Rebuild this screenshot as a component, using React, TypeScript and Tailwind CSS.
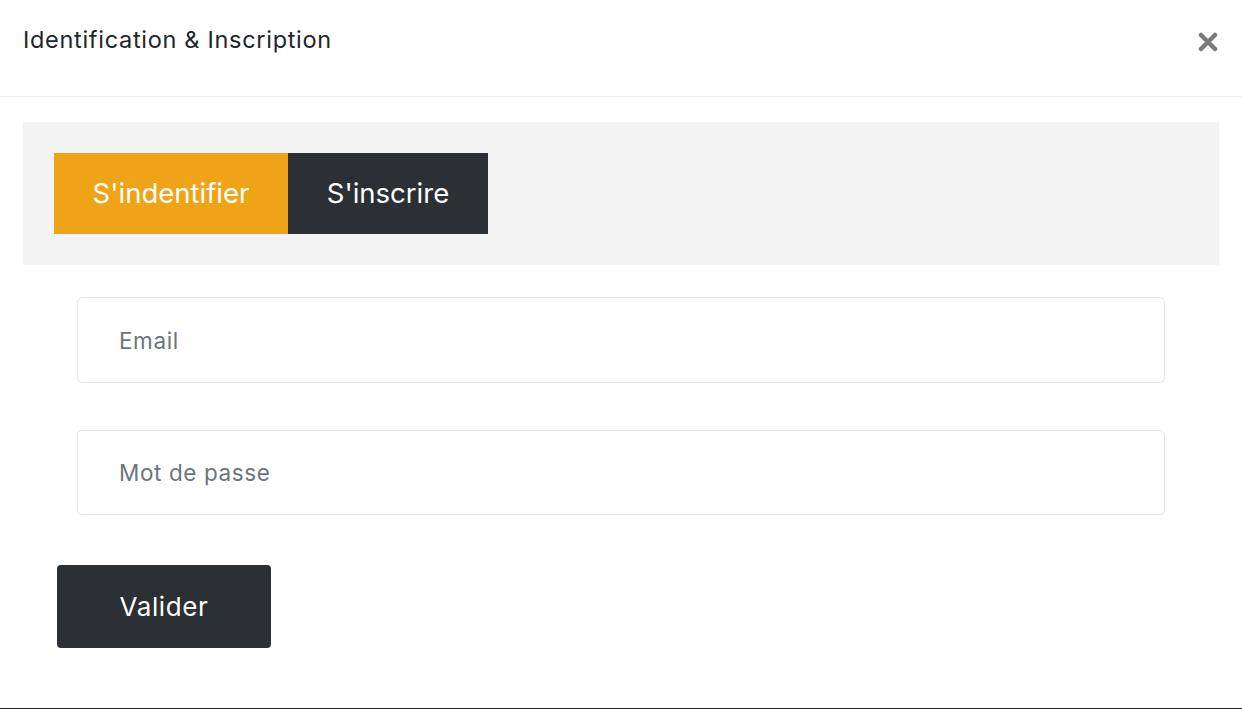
import { useState } from "react"

// Close icon, chunky "times" cross
function CloseIcon() {
  return (
    <svg width="20" height="20" viewBox="0 0 20 20" aria-hidden="true">
      <path d="M3 3 L17 17 M17 3 L3 17" stroke="#7a7a7a" strokeWidth="4.5" strokeLinecap="round" />
    </svg>
  )
}

export default function App() {
  const [tab, setTab] = useState<"login" | "signup">("login")

  return (
    <div className="w-[1242px] h-[709px] bg-white flex flex-col border-b border-[#222] font-['Inter',sans-serif]">
      {/* Header */}
      <div className="h-[97px] border-b border-[#e9ecef] flex justify-between pl-[23px] pr-[24px]">
        <h5 className="pt-[25px] text-[23.5px] leading-[30px] text-[#212529] font-normal tracking-[0.7px]">
          Identification &amp; Inscription
        </h5>
        <button className="pt-[32px] h-fit">
          <CloseIcon />
        </button>
      </div>

      {/* Body */}
      <div className="px-[23px] pt-[25px] flex flex-col">
        <div className="bg-[#f4f4f4] h-[143px] flex items-center pl-[31px]">
          <button
            onClick={() => setTab("login")}
            className={`w-[234px] h-[81px] text-white text-[27.5px] ${tab === "login" ? "bg-[#eea416]" : "bg-[#2c2f33]"}`}
          >
            S'indentifier
          </button>
          <button
            onClick={() => setTab("signup")}
            className={`w-[200px] h-[81px] text-white text-[27.5px] ${tab === "signup" ? "bg-[#eea416]" : "bg-[#2c2f33]"}`}
          >
            S'inscrire
          </button>
        </div>

        <div className="px-[54px] pt-[32px] flex flex-col gap-[47px]">
          <input
            type="email"
            placeholder="Email"
            className="h-[86px] w-full border border-[#e6e6e6] rounded-[5px] pl-[41px] text-[22.5px] tracking-[0.6px] placeholder:text-[#6c757d] outline-none"
          />
          <input
            type="password"
            placeholder="Mot de passe"
            className="h-[85px] w-full border border-[#e6e6e6] rounded-[5px] pl-[41px] text-[22.5px] tracking-[0.6px] placeholder:text-[#6c757d] outline-none"
          />
        </div>

        <div className="pl-[34px] pt-[50px]">
          <button className="w-[214px] h-[83px] bg-[#2c2f33] rounded-[4px] text-white text-[26px] tracking-[0.6px]">
            Valider
          </button>
        </div>
      </div>
    </div>
  )
}
